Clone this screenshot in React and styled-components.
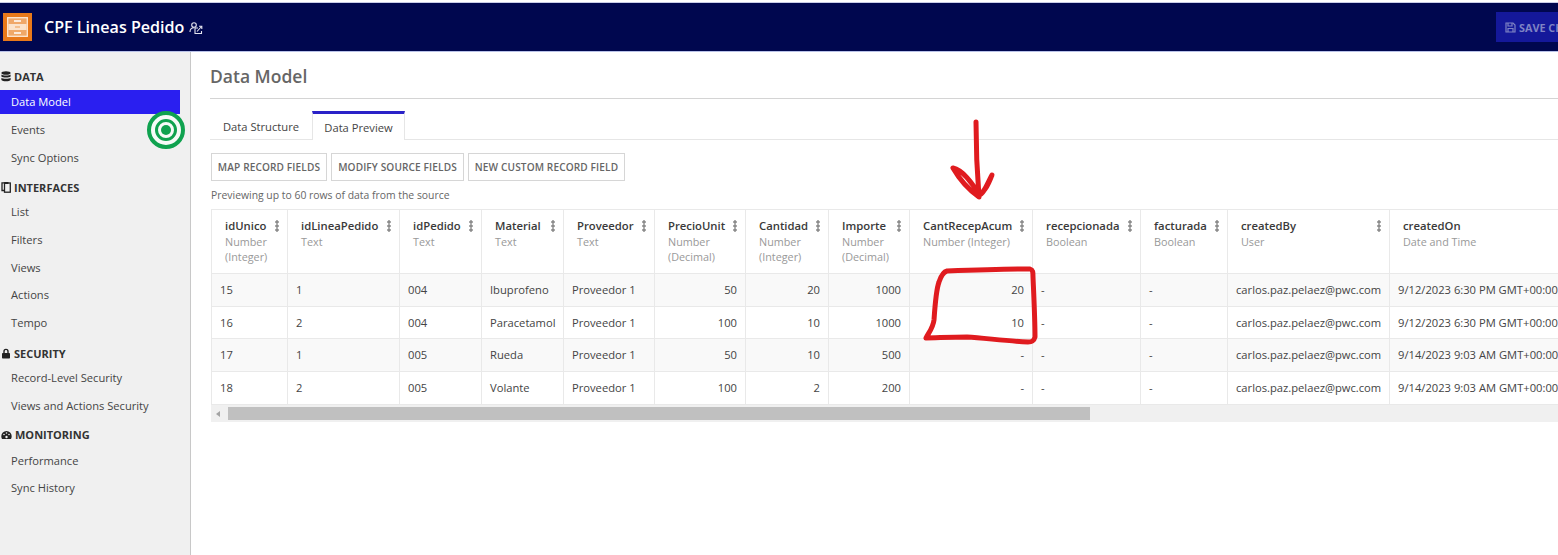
import React from 'react'
import styled, { createGlobalStyle } from 'styled-components'

const GlobalStyle = createGlobalStyle`
  html, body {
    margin: 0;
    padding: 0;
    width: 1558px;
    height: 555px;
    overflow: hidden;
    background: #fff;
    font-family: "Open Sans", "Liberation Sans", sans-serif;
    color: #444;
  }
  * { box-sizing: border-box; }
`

const Page = styled.div`
  position: relative;
  width: 1558px;
  height: 555px;
  overflow: hidden;
  padding-top: 2px;
  background: #fff;
  display: flex;
  flex-direction: column;
`

const Header = styled.header`
  height: 50px;
  flex: none;
  background: #00074f;
  display: flex;
  align-items: center;
  padding-left: 3px;
  border-bottom: 1px solid #b9c2e8;
  border-top: 1px solid #c9cde8;
`

const Logo = styled.div`
  width: 29px;
  height: 28px;
  background: #e8791a;
  display: flex;
  align-items: center;
  justify-content: center;
`

const AppTitle = styled.h1`
  margin: 0 0 0 12px;
  font-size: 16.1px;
  font-weight: 600;
  color: #fff;
  line-height: 22px;
`

const TitleIcon = styled.svg`
  margin-left: 5px;
  margin-top: 2px;
`

const SaveButton = styled.div`
  margin-left: auto;
  width: 62px;
  height: 30px;
  background: #14189a;
  color: #7f83c4;
  font-size: 10.8px;
  font-weight: 700;
  display: flex;
  align-items: center;
  gap: 3px;
  padding-left: 9px;
  white-space: nowrap;
  overflow: hidden;
`

const Body = styled.div`
  flex: 1;
  display: flex;
  min-height: 0;
`

const Sidebar = styled.nav`
  width: 191px;
  flex: none;
  background: #f0f0f0;
  border-right: 1px solid #c8c8c8;
  padding-top: 16px;
`

const SectionTitle = styled.div`
  height: 19px;
  padding: 0 0 2px 1px;
  display: flex;
  align-items: center;
  gap: 3px;
  margin-top: ${(p) => p.$top || 0}px;
  margin-bottom: ${(p) => p.$after || 0}px;
  font-size: 11px;
  font-weight: 700;
  color: #333;
`

const NavItem = styled.div`
  width: 180px;
  height: ${(p) => (p.$active ? 24 : 27.8)}px;
  margin-bottom: ${(p) => (p.$active ? 2 : 0)}px;
  padding: 0 0 ${(p) => (p.$active ? 2 : 0)}px 11px;
  display: flex;
  align-items: center;
  font-size: 11.15px;
  color: ${(p) => (p.$active ? '#fff' : '#444')};
  background: ${(p) => (p.$active ? '#2a1ff0' : 'transparent')};
`

const Main = styled.main`
  flex: 1;
  min-width: 0;
  padding: 12px 0 0 19px;
`

const PageTitle = styled.h2`
  margin: 0;
  height: 35px;
  font-size: 17.5px;
  font-weight: 600;
  color: #666;
  line-height: 24px;
  border-bottom: 1px solid #d4d4d4;
`

const Tabs = styled.div`
  display: flex;
  margin-top: 12px;
  height: 29px;
  border-bottom: 1px solid #e6e6e6;
`

const Tab = styled.div`
  height: ${(p) => (p.$active ? 29 : 28)}px;
  width: ${(p) => p.$w}px;
  font-size: 11.2px;
  color: #444;
  text-align: center;
  line-height: ${(p) => (p.$active ? 27 : 31)}px;
  background: #fff;
  border-top: ${(p) => (p.$active ? '3px solid #2a22c8' : '0')};
  border-left: ${(p) => (p.$active ? '1px solid #e6e6e6' : '0')};
  border-right: ${(p) => (p.$active ? '1px solid #e6e6e6' : '0')};
`

const Toolbar = styled.div`
  display: flex;
  gap: 4px;
  margin: 13px 0 0 1px;
`

const ToolButton = styled.div`
  height: 28px;
  width: ${(p) => p.$w}px;
  border: 1px solid #d6d6d6;
  font-size: 10.1px;
  font-weight: 600;
  color: #666;
  letter-spacing: 0.12px;
  display: flex;
  align-items: center;
  justify-content: center;
  white-space: nowrap;
`

const PreviewNote = styled.div`
  margin: 8px 0 0 1px;
  height: 13px;
  font-size: 10.4px;
  line-height: 13px;
  color: #666;
`

const TableWrap = styled.div`
  margin: 7px 0 0 1px;
  width: 1400px;
  overflow: hidden;
`

const Grid = styled.table`
  border-collapse: collapse;
  table-layout: fixed;
  width: 1420px;
  border-top: 1px solid #e9e9e9;
  border-left: 1px solid #e9e9e9;
`

const HeadCell = styled.th`
  height: 64px;
  padding: 7px 5px 0 13px;
  vertical-align: top;
  text-align: left;
  font-weight: 400;
  border-right: 1px solid #e9e9e9;
  border-bottom: 1px solid #e9e9e9;
`

const HeadRow = styled.div`
  display: flex;
  align-items: center;
  justify-content: space-between;
  height: 17px;
  font-size: 11.3px;
  font-weight: 600;
  color: #3a3a3a;
  white-space: nowrap;
`

const Kebab = styled.span`
  flex: none;
  width: 4px;
  height: 12px;
  margin-right: 3px;
  background: radial-gradient(circle, #8d8d8d 1.5px, transparent 1.8px) 0 0 / 4px 4px repeat-y;
`

const TypeLabel = styled.div`
  font-size: 10.8px;
  line-height: 15px;
  color: #999;
`

const DataRow = styled.tr`
  background: ${(p) => (p.$odd ? '#f9f9f9' : '#fff')};
`

const Cell = styled.td`
  height: ${(p) => p.$h}px;
  padding: 0 8px ${(p) => (p.$h === 33 ? 2 : 0)}px;
  font-size: 11.2px;
  color: #444;
  white-space: nowrap;
  overflow: hidden;
  text-align: ${(p) => (p.$num ? 'right' : 'left')};
  border-right: 1px solid #e9e9e9;
  border-bottom: 1px solid #e9e9e9;
`

const ScrollBar = styled.div`
  height: 17px;
  background: #f0f0f0;
  display: flex;
  align-items: center;
  position: relative;
`

const ScrollArrow = styled.div`
  width: 0;
  height: 0;
  margin-left: 5px;
  border-top: 3px solid transparent;
  border-bottom: 3px solid transparent;
  border-right: 4px solid #a3a3a3;
`

const ScrollThumb = styled.div`
  width: 862px;
  height: 13px;
  margin-left: 8px;
  background: #c0c0c0;
`

const Target = styled.div`
  position: absolute;
  left: 147px;
  top: 111px;
  width: 38px;
  height: 38px;
  border-radius: 50%;
  border: 4px solid #0fa24f;
  background: #f6fbf8;
  display: flex;
  align-items: center;
  justify-content: center;
  &::before {
    content: '';
    display: block;
    flex: none;
    box-sizing: border-box;
    width: 22px;
    height: 22px;
    border-radius: 50%;
    border: 3px solid #0fa24f;
  }
  &::after {
    content: '';
    position: absolute;
    left: 50%;
    top: 50%;
    width: 10px;
    height: 10px;
    margin: -5px 0 0 -5px;
    border-radius: 50%;
    background: #0fa24f;
  }
`

const Scribble = styled.svg`
  position: absolute;
  left: 0;
  top: 0;
  pointer-events: none;
`

const columns = [
  { name: 'idUnico', type: 'Number (Integer)', w: 76, typeWidth: 50 },
  { name: 'idLineaPedido', type: 'Text', w: 112 },
  { name: 'idPedido', type: 'Text', w: 82 },
  { name: 'Material', type: 'Text', w: 82 },
  { name: 'Proveedor', type: 'Text', w: 91 },
  { name: 'PrecioUnit', type: 'Number (Decimal)', w: 91, num: true, typeWidth: 50 },
  { name: 'Cantidad', type: 'Number (Integer)', w: 83, num: true, typeWidth: 50 },
  { name: 'Importe', type: 'Number (Decimal)', w: 81, num: true, typeWidth: 50 },
  { name: 'CantRecepAcum', type: 'Number (Integer)', w: 123, num: true },
  { name: 'recepcionada', type: 'Boolean', w: 108 },
  { name: 'facturada', type: 'Boolean', w: 87 },
  { name: 'createdBy', type: 'User', w: 162 },
  { name: 'createdOn', type: 'Date and Time', w: 242 }
]

const rows = [
  { h: 33, cells: ['15', '1', '004', 'Ibuprofeno', 'Proveedor 1', '50', '20', '1000', '20', '-', '-', 'carlos.paz.pelaez@pwc.com', '9/12/2023 6:30 PM GMT+00:00'] },
  { h: 32, cells: ['16', '2', '004', 'Paracetamol', 'Proveedor 1', '100', '10', '1000', '10', '-', '-', 'carlos.paz.pelaez@pwc.com', '9/12/2023 6:30 PM GMT+00:00'] },
  { h: 33, cells: ['17', '1', '005', 'Rueda', 'Proveedor 1', '50', '10', '500', '-', '-', '-', 'carlos.paz.pelaez@pwc.com', '9/14/2023 9:03 AM GMT+00:00'] },
  { h: 33, cells: ['18', '2', '005', 'Volante', 'Proveedor 1', '100', '2', '200', '-', '-', '-', 'carlos.paz.pelaez@pwc.com', '9/14/2023 9:03 AM GMT+00:00'] }
]

const nav = [
  { title: 'DATA', icon: 'db', after: 3, items: ['Data Model', 'Events', 'Sync Options'] },
  { title: 'INTERFACES', icon: 'copy', top: 7, items: ['List', 'Filters', 'Views', 'Actions', 'Tempo'] },
  { title: 'SECURITY', icon: 'lock', top: 8, items: ['Record-Level Security', 'Views and Actions Security'] },
  { title: 'MONITORING', icon: 'gauge', top: 7, after: 1, items: ['Performance', 'Sync History'] }
]

const SectionIcon = ({ kind }) => {
  if (kind === 'db') {
    return (
      <svg width="10" height="11" viewBox="0 0 10 11" fill="#222">
        <ellipse cx="5" cy="2" rx="4.6" ry="1.8" />
        <path d="M.4 3.4C1.4 4.8 8.6 4.8 9.6 3.4V5.4C8.6 6.9 1.4 6.9.4 5.4Z" />
        <path d="M.4 6.8C1.4 8.2 8.6 8.2 9.6 6.8V9C8.6 10.7 1.4 10.7.4 9Z" />
      </svg>
    )
  }
  if (kind === 'copy') {
    return (
      <svg width="10" height="11" viewBox="0 0 10 11" fill="none" stroke="#222" strokeWidth="1.3">
        <path d="M3.5 8.5H1V.8H4.5" />
        <rect x="3.5" y="1" width="5.8" height="9.2" fill="#f0f0f0" />
        <path d="M3.5 1H7.5" strokeWidth="2" />
      </svg>
    )
  }
  if (kind === 'lock') {
    return (
      <svg width="10" height="11" viewBox="0 0 10 11" fill="#222">
        <path d="M2.3 5V3.4a2.7 2.7 0 0 1 5.4 0V5H6.3V3.4a1.3 1.3 0 0 0-2.6 0V5Z" />
        <rect x="1" y="5" width="8" height="5.6" rx=".8" />
      </svg>
    )
  }
  return (
    <svg width="11" height="10" viewBox="0 0 11 10" fill="#222">
      <path d="M5.5 1A5.2 5.2 0 0 0 .3 6.200c0 1 .3 1.900.7 2.800h9c.4-.9.7-1.800.7-2.800A5.200 5.200 0 0 0 5.500 1Z" />
      <circle cx="3" cy="4.500" r=".8" fill="#f0f0f0" />
      <circle cx="8" cy="4.500" r=".8" fill="#f0f0f0" />
      <circle cx="5.500" cy="3" r=".8" fill="#f0f0f0" />
      <circle cx="5.500" cy="7" r="1.200" fill="#f0f0f0" />
    </svg>
  )
}

const App = () => {
  return (
    <Page>
      <GlobalStyle />
      <Header>
        <Logo>
          <svg width="21" height="20" viewBox="0 0 21 20" fill="none">
            <rect x=".7" y=".7" width="19.600" height="18.600" fill="#f0a868" stroke="#fde8d4" strokeWidth="1.300" />
            <rect x="1.400" y="7" width="18.200" height="6" fill="#fbe3cb" />
            <path d="M7 4H14M7 16H14" stroke="#fff" strokeWidth="1.600" />
            <path d="M8 10H13" stroke="#f0a868" strokeWidth="1.200" />
          </svg>
        </Logo>
        <AppTitle>CPF Lineas Pedido</AppTitle>
        <TitleIcon width="14" height="14" viewBox="0 0 14 14" fill="none" stroke="#e4e4ee" strokeWidth="1.100">
          <circle cx="5" cy="4" r="2.300" />
          <path d="M1 11c0-3 2-4.200 4-4.200" />
          <path d="M9 7H6V12.500H12.500V10" />
          <path d="M8 10.500 12.500 5.500M10 5.200h2.800V8" />
        </TitleIcon>
        <SaveButton>
          <svg width="11" height="11" viewBox="0 0 11 11" fill="none" stroke="#7f83c4" strokeWidth="1.200" style={{ flex: 'none' }}>
            <path d="M1 1H8L10 3V10H1Z" />
            <path d="M3 1V4H7V1M3 10V6.500H8V10" />
          </svg>
          SAVE CHANGES
        </SaveButton>
      </Header>
      <Body>
        <Sidebar>
          {nav.map((section) => (
            <div key={section.title}>
              <SectionTitle $top={section.top} $after={section.after}>
                <SectionIcon kind={section.icon} />
                {section.title}
              </SectionTitle>
              {section.items.map((item) => (
                <NavItem key={item} $active={item === 'Data Model'}>
                  {item}
                </NavItem>
              ))}
            </div>
          ))}
        </Sidebar>
        <Main>
          <PageTitle>Data Model</PageTitle>
          <Tabs>
            <Tab $w={102}>Data Structure</Tab>
            <Tab $w={93} $active>Data Preview</Tab>
          </Tabs>
          <Toolbar>
            <ToolButton $w={116}>MAP RECORD FIELDS</ToolButton>
            <ToolButton $w={133}>MODIFY SOURCE FIELDS</ToolButton>
            <ToolButton $w={157}>NEW CUSTOM RECORD FIELD</ToolButton>
          </Toolbar>
          <PreviewNote>Previewing up to 60 rows of data from the source</PreviewNote>
          <TableWrap>
            <Grid>
              <colgroup>
                {columns.map((col) => (
                  <col key={col.name} style={{ width: col.w }} />
                ))}
              </colgroup>
              <thead>
                <tr>
                  {columns.map((col) => (
                    <HeadCell key={col.name}>
                      <HeadRow>
                        {col.name}
                        <Kebab />
                      </HeadRow>
                      <TypeLabel style={{ width: col.typeWidth }}>{col.type}</TypeLabel>
                    </HeadCell>
                  ))}
                </tr>
              </thead>
              <tbody>
                {rows.map((row, r) => (
                  <DataRow key={row.cells[0]} $odd={r % 2 === 0}>
                    {row.cells.map((value, c) => (
                      <Cell key={columns[c].name} $h={row.h} $num={columns[c].num}>
                        {value}
                      </Cell>
                    ))}
                  </DataRow>
                ))}
              </tbody>
            </Grid>
            <ScrollBar>
              <ScrollArrow />
              <ScrollThumb />
            </ScrollBar>
          </TableWrap>
        </Main>
      </Body>
      <Target />
      <Scribble width="1558" height="555" viewBox="0 0 1558 555" fill="none" stroke="#e01b1f" strokeLinecap="round" strokeLinejoin="round">
        <path strokeWidth="5" d="M976 122C976 145 977 172 979 197C972 192 961 182 953 168C962 170 972 182 979 195C984 194 988 182 992 175C989 182 987 188 984 190" />
        <path strokeWidth="5" d="M926 338C929 332 933 328 934 320C935 305 936 290 939 282C941 276 943 272 947 271C975 270 1005 269 1030 269C1033 270 1033 272 1033 277C1034 300 1035 320 1035 337C1034 341 1032 342 1028 342C1005 341 985 338 967 337C950 337 935 338 926 338" />
      </Scribble>
    </Page>
  )
}

export default App
